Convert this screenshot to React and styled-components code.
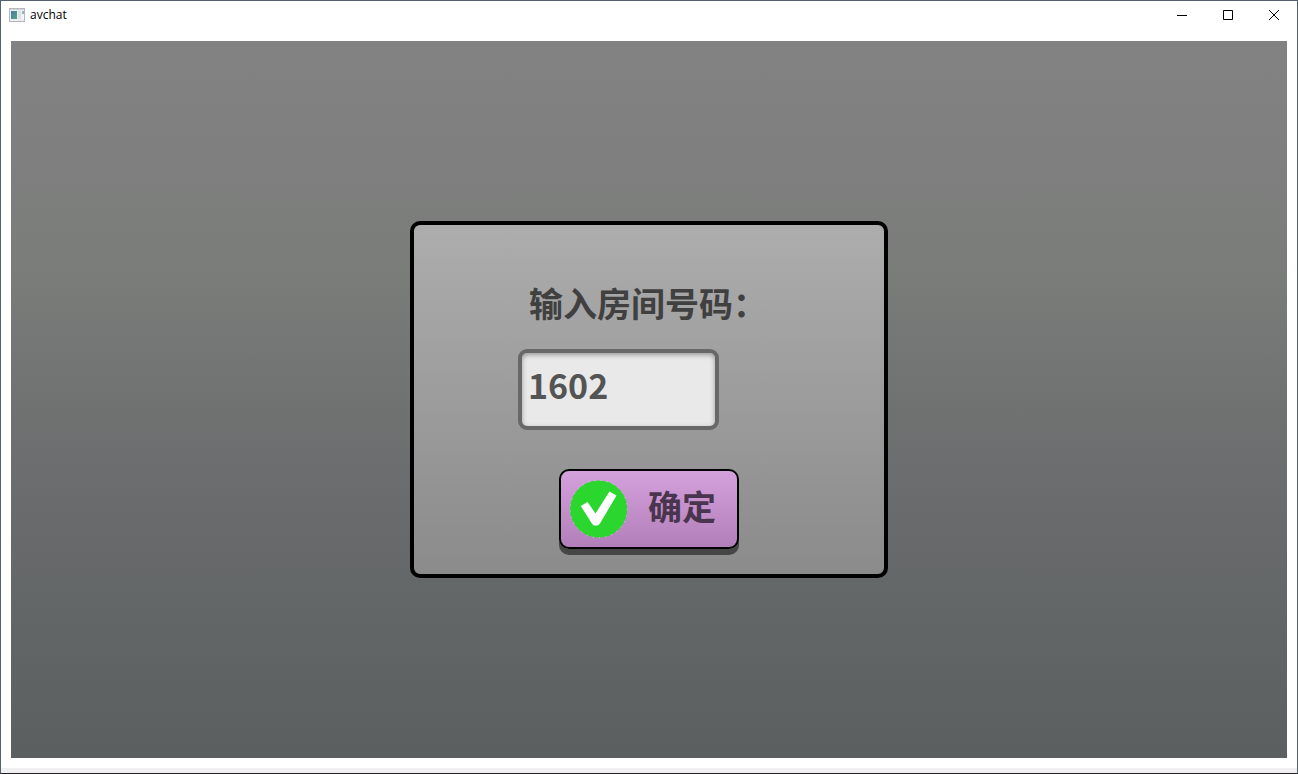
import React, { useState } from "react";
import styled, { createGlobalStyle } from "styled-components";

const GlobalStyle = createGlobalStyle`
  * { box-sizing: border-box; }
  body { margin: 0; }
`;

const Window = styled.div`
  display: flex;
  flex-direction: column;
  min-height: 100vh;
  background: #fff;
  border: 1px solid #566170;
  border-bottom-color: #232126;
  font-family: "Open Sans", "Noto Sans CJK SC", sans-serif;
`;

const TitleBar = styled.header`
  display: flex;
  align-items: center;
  height: 28px;
  margin-bottom: 2px;
  padding-left: 8px;
  gap: 5px;
`;

const Title = styled.h1`
  flex: 1;
  margin: 0;
  font-size: 12px;
  line-height: 16px;
  font-weight: 400;
  color: #000;
`;

const WindowButtons = styled.div`
  display: flex;
  align-self: stretch;
`;

const WindowButton = styled.button`
  display: flex;
  align-items: center;
  justify-content: center;
  width: 46px;
  padding: 0;
  border: 0;
  background: transparent;
  &:hover { background: #e5e5e5; }
`;

const Client = styled.main`
  flex: 1;
  display: flex;
  padding: 10px;
`;

const Stage = styled.section`
  flex: 1;
  display: flex;
  align-items: center;
  justify-content: center;
  background: linear-gradient(#828282, #7a7c7a 33%, #6b6d6e 60%, #646767 77%, #5b5f5f);
`;

const Dialog = styled.form`
  display: flex;
  flex-direction: column;
  width: 478px;
  padding: 53px 104px 20px;
  border: 4px solid #000;
  border-radius: 10px;
  background: linear-gradient(#adadad, #8b8b8b);
  font-family: "Noto Sans CJK SC", sans-serif;
  font-size: 34px;
  line-height: 50px;
  font-weight: 700;
`;

const Label = styled.label`
  padding-left: 11px;
  color: #404040;
  white-space: nowrap;
`;

const RoomInput = styled.input`
  width: 201px;
  height: 81px;
  margin-top: 21px;
  padding: 0 6px 10px;
  border: 4px solid #686868;
  border-radius: 9px;
  background: #e9e9e9;
  box-shadow: inset 0 2px 5px rgba(0, 0, 0, 0.35);
  color: #545454;
  font: inherit;
  outline: none;
`;

const ConfirmButton = styled.button`
  display: flex;
  align-items: center;
  align-self: center;
  gap: 20px;
  width: 180px;
  height: 80px;
  margin: 39px 0 5px;
  padding: 0 9px;
  border: 2px solid #000;
  border-radius: 10px;
  background: linear-gradient(#d4a1dd, #b37fbb);
  box-shadow: 0 6px 0 #464646;
  color: #4a354e;
  font: inherit;
`;

const ButtonText = styled.span`
  padding-bottom: 6px;
`;

const StatusBar = styled.footer`
  height: 5px;
  background: #f0f0f0;
`;

function AppIcon() {
  return (
    <svg width="16" height="14" viewBox="0 0 16 14" aria-hidden="true">
      <defs>
        <linearGradient id="pane" x1="0" y1="0" x2="1" y2="1">
          <stop offset="0" stopColor="#487ba5" />
          <stop offset="1" stopColor="#56a583" />
        </linearGradient>
      </defs>
      <rect x="0.5" y="0.5" width="15" height="13" fill="#eceef1" stroke="#b4b8be" />
      <path d="M1 1.5h14" stroke="#d2d5dc" />
      <rect x="2" y="3" width="6" height="8" fill="url(#pane)" />
      <rect x="9" y="3" width="3" height="8" fill="#dfe2e5" />
      <rect x="13" y="3" width="2" height="3" fill="#91b9b5" />
      <rect x="13" y="7" width="2" height="4" fill="#f6f7fa" />
    </svg>
  );
}

function CheckIcon() {
  return (
    <svg width="58" height="58" viewBox="0 0 58 58" aria-hidden="true">
      <circle cx="28.7" cy="29" r="28.6" fill="#2bd72f" />
      <circle cx="28.7" cy="29" r="28.6" fill="none" stroke="#d8efdc" strokeWidth="0.6" strokeDasharray="1.2 5" />
      <path
        d="M10.8 26L17.5 22L25.5 33.5L39.5 11.5L46.5 15.5L29.8 43.8Q28.8 45.5 27 45.5H25Q23.2 45.5 22.2 44Z"
        fill="#fff"
      />
    </svg>
  );
}

const controls = [
  { name: "最小化", path: "M0 5.5h10" },
  { name: "最大化", path: "M0.5 0.5h9v9h-9z" },
  { name: "关闭", path: "M0 0L10 10M10 0L0 10" },
];

export default function App() {
  const [room, setRoom] = useState("1602");
  return (
    <>
      <GlobalStyle />
      <Window lang="zh-CN">
        <TitleBar>
          <AppIcon />
          <Title>avchat</Title>
          <WindowButtons>
            {controls.map(({ name, path }) => (
              <WindowButton key={name} type="button" aria-label={name}>
                <svg width="10" height="10" viewBox="0 0 10 10" fill="none" stroke="#000">
                  <path d={path} />
                </svg>
              </WindowButton>
            ))}
          </WindowButtons>
        </TitleBar>
        <Client>
          <Stage>
            <Dialog onSubmit={(e) => e.preventDefault()}>
              <Label htmlFor="room">输入房间号码：</Label>
              <RoomInput id="room" value={room} onChange={(e) => setRoom(e.target.value)} />
              <ConfirmButton type="submit">
                <CheckIcon />
                <ButtonText>确定</ButtonText>
              </ConfirmButton>
            </Dialog>
          </Stage>
        </Client>
        <StatusBar />
      </Window>
    </>
  );
}
